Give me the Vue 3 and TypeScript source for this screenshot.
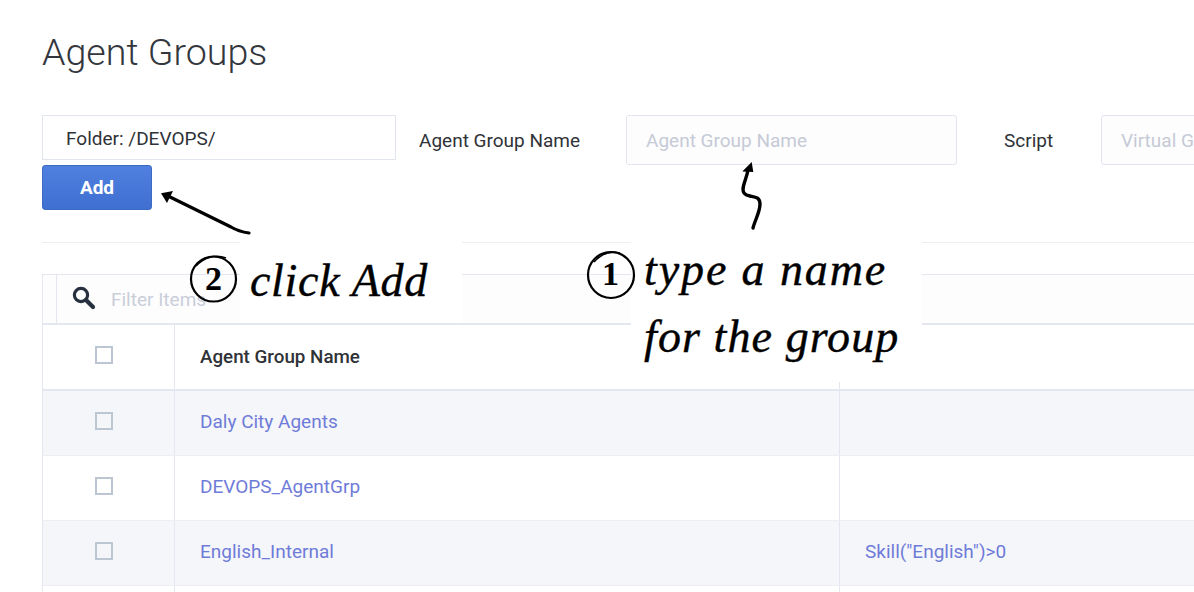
<script setup lang="ts">
interface Row { name: string; script: string }
const rows: Row[] = [
  { name: 'Daly City Agents', script: '' },
  { name: 'DEVOPS_AgentGrp', script: '' },
  { name: 'English_Internal', script: 'Skill("English")>0' },
]
</script>

<template>
  <div class="page">
    <h1 class="title">Agent Groups</h1>

    <div class="form">
      <div class="left">
        <div class="folder">Folder: /DEVOPS/</div>
        <button class="add" type="button">Add</button>
      </div>
      <label class="lbl lbl-name">Agent Group Name</label>
      <input class="inp inp-name" placeholder="Agent Group Name" />
      <label class="lbl lbl-script">Script</label>
      <input class="inp inp-script" placeholder="Virtual Group Script" />
    </div>

    <hr class="rule" />

    <div class="table">
      <div class="toolbar">
        <div class="search">
          <svg class="mag" width="24" height="24" viewBox="0 0 24 24">
            <circle cx="9" cy="9" r="6.6" fill="none" stroke="#26303f" stroke-width="3.2" />
            <path d="M14 14 L21 21" stroke="#26303f" stroke-width="4.2" stroke-linecap="round" />
          </svg>
          <span class="filter">Filter Items</span>
        </div>
      </div>
      <div class="row head">
        <div class="cell check"><span class="box"></span></div>
        <div class="cell name"><span class="txt">Agent Group Name</span></div>
        <div class="cell rest"></div>
      </div>
      <div v-for="(r, i) in rows" :key="r.name" class="row" :class="{ alt: i % 2 === 0 }">
        <div class="cell check"><span class="box"></span></div>
        <div class="cell name link"><span class="txt">{{ r.name }}</span></div>
        <div class="cell rest link"><span class="txt">{{ r.script }}</span></div>
      </div>
      <div class="row">
        <div class="cell check"></div>
        <div class="cell name"></div>
        <div class="cell rest"></div>
      </div>
    </div>

    <div class="patch patch-a"></div>
    <div class="patch patch-b"></div>

    <svg class="ink" width="1194" height="592" viewBox="0 0 1194 592">
      <path d="M249 233 C242 232 236 230 231 227 L168 196" fill="none" stroke="#000" stroke-width="3.2" stroke-linecap="round" />
      <path d="M161 193.3 L173 191 L167 203 Z" fill="#000" />
      <path d="M753 228 C755 220 760 212 760 204 C760 197 755 197 750 196 C744 195 742 192 743.5 186 C745 180 747 176 748 170" fill="none" stroke="#000" stroke-width="3.4" stroke-linecap="round" />
      <path d="M751.7 162 L742.3 171.5 L753.3 172 Z" fill="#000" />
      <circle cx="213.5" cy="279" r="22.5" fill="none" stroke="#000" stroke-width="2.2" />
      <path d="M196 266 C204 257 216 254 226 258" fill="none" stroke="#000" stroke-width="1.6" />
      <circle cx="611" cy="275" r="23" fill="none" stroke="#000" stroke-width="2.2" />
      <path d="M594 262 C602 253 612 251 620 253" fill="none" stroke="#000" stroke-width="1.6" />
    </svg>

    <span class="hand num num-2">2</span>
    <span class="hand num num-1">1</span>
    <span class="hand note note-add">click Add</span>
    <span class="hand note note-type">type a name</span>
    <span class="hand note note-group">for the group</span>
  </div>
</template>

<style>
html, body { margin: 0; background: #fff; overflow: hidden; }
</style>

<style scoped>
.page {
  position: relative;
  width: 1194px;
  height: 592px;
  overflow: hidden;
  background: #fff;
  padding-left: 42px;
  box-sizing: border-box;
  font-family: Roboto, "Liberation Sans", sans-serif;
  color: #2f3237;
}
.title {
  margin: 0;
  padding-top: 31px;
  height: 115px;
  box-sizing: border-box;
  font-size: 37.6px;
  line-height: 42px;
  font-weight: 300;
  color: #33373d;
}
.form {
  display: flex;
  align-items: flex-start;
  width: 1300px;
  height: 127px;
}
.left { width: 354px; flex: none; display: flex; flex-direction: column; gap: 5px; }
.folder {
  height: 45px;
  box-sizing: border-box;
  border: 1px solid #e1e5ee;
  padding-left: 23px;
  font-size: 19px;
  line-height: 46px;
}
.add {
  width: 110px;
  height: 45px;
  border: 1px solid #3c6bc4;
  border-radius: 3px;
  background: linear-gradient(#4f7fdf, #3f6fd0);
  color: #fff;
  font: 700 19px/43px Roboto, sans-serif;
  padding: 0 0 2px;
}
.lbl { font-size: 19px; line-height: 52px; flex: none; }
.lbl-name { margin-left: 23px; width: 207px; }
.lbl-script { margin-left: 47px; width: 97px; }
.inp {
  height: 50px;
  box-sizing: border-box;
  border: 1px solid #e1e5ee;
  border-radius: 3px;
  background: #fdfdfe;
  padding: 0 19px;
  font: 19px Roboto, sans-serif;
  flex: none;
  outline: none;
}
.inp::placeholder { color: #c5cad6; opacity: 1; }
.inp-name { width: 331px; }
.inp-script { width: 300px; }
.rule {
  margin: 0;
  border: 0;
  border-top: 1px solid #eceef3;
  width: 1200px;
  height: 0;
}
.table {
  margin-top: 31px;
  width: 1300px;
  border-left: 1px solid #e4e7ef;
  border-top: 1px solid #e4e7ef;
}
.toolbar {
  height: 48px;
  padding-left: 13px;
  background: #fdfdfe;
  border-bottom: 2px solid #e4e7ef;
}
.search {
  height: 48px;
  border-left: 1px solid #e4e7ef;
  display: flex;
  align-items: center;
  padding-left: 16px;
}
.mag { flex: none; margin-left: -1px; margin-top: -3px; }
.filter { margin-left: 15px; font-size: 19px; color: #c9ced9; }
.row {
  display: grid;
  grid-template-columns: 131px 665px 1fr;
  height: 65px;
  border-bottom: 1px solid #eceef3;
  box-sizing: border-box;
}
.row.head { height: 66px; border-bottom: 2px solid #e4e7ef; }
.row.alt { background: #f5f6fa; }
.cell { display: flex; align-items: center; font-size: 19px; }
.check { justify-content: center; padding-right: 9px; }
.box {
  width: 14px;
  height: 14px;
  border: 2px solid #bcc5d2;
  background: #fff;
  margin-top: -5px;
}
.alt .box { background: #f5f6fa; }
.name { border-left: 1px solid #e4e7ef; padding-left: 25px; }
.rest { border-left: 1px solid #e4e7ef; padding-left: 25px; }
.txt { margin-top: -3px; }
.head .txt { margin-top: -1px; }
.head .name { font-weight: 500; font-size: 18.8px; color: #2f3237; }
.link { color: #6f7bd8; }
.patch { position: absolute; background: #fff; }
.patch-a { left: 240px; top: 242px; width: 222px; height: 81px; }
.patch-b { left: 631px; top: 242px; width: 291px; height: 140px; }
.ink { position: absolute; left: 0; top: 0; pointer-events: none; }
.hand {
  position: absolute;
  font-family: "Liberation Serif", serif;
  font-style: italic;
  color: #000;
  white-space: nowrap;
}
.note { font-size: 46px; line-height: 48px; -webkit-text-stroke: 0.4px #000; }
.note-add { left: 250px; top: 257px; letter-spacing: 0.7px; }
.note-type { left: 644px; top: 246px; letter-spacing: 1.9px; }
.note-group { left: 644px; top: 313px; letter-spacing: 1.1px; }
.num { font-size: 34px; line-height: 40px; font-weight: 700; font-style: normal; }
.num-2 { left: 205px; top: 259px; }
.num-1 { left: 602px; top: 254px; }
</style>
